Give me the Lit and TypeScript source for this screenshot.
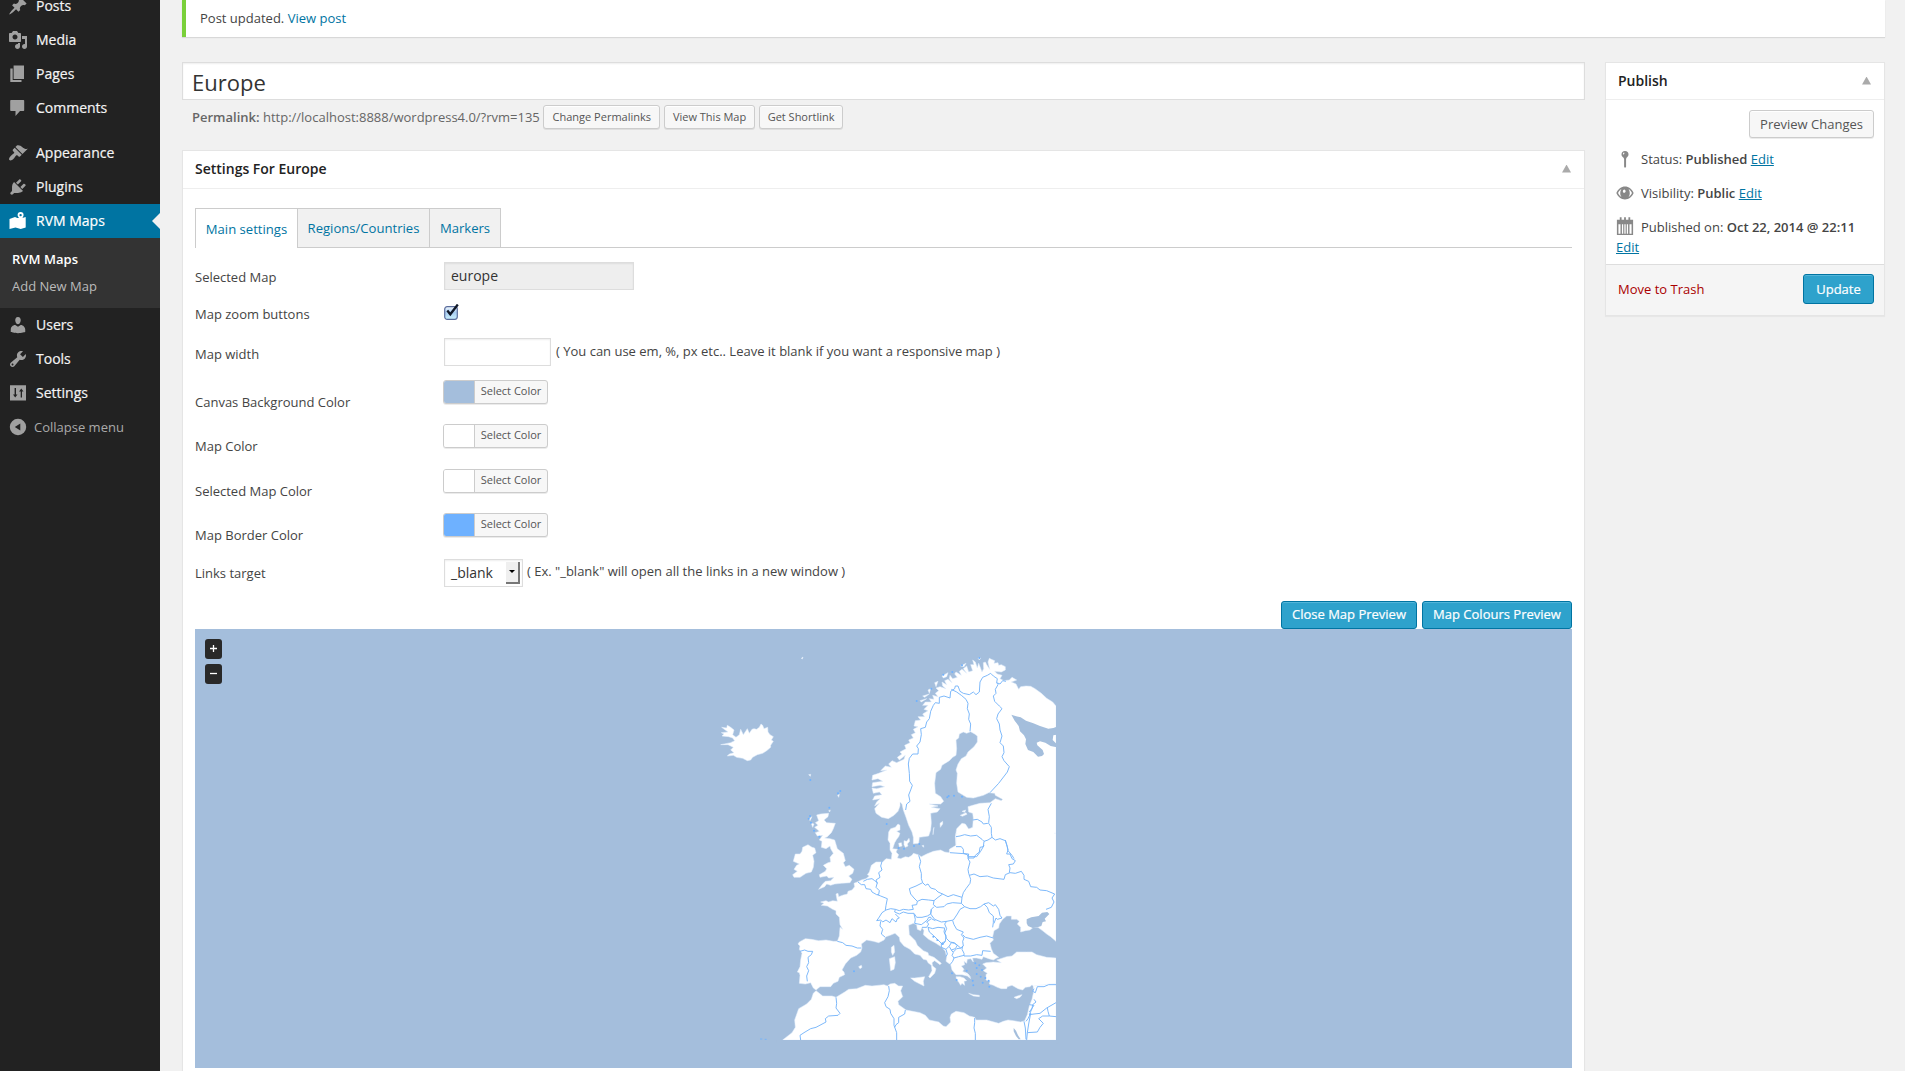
import { LitElement, html, css, svg } from "lit";
import { customElement, property } from "lit/decorators.js";
import { classMap } from "lit/directives/class-map.js";

const ICONS: Record<string, string> = {
  posts:
    "M10.44 3.02l1.82-1.82 6.36 6.35-1.83 1.82c-1.05-.68-2.48-.57-3.41.36l-.75.75c-.92.93-1.04 2.35-.35 3.41l-1.83 1.82-2.41-2.41-2.8 2.79c-.42.42-3.38 2.71-3.8 2.29s1.86-3.39 2.28-3.81l2.79-2.79L4.1 9.36l1.83-1.82c1.05.69 2.48.57 3.4-.36l.75-.75c.93-.92 1.05-2.35.36-3.41z",
  media:
    "M13 11V4c0-.55-.45-1-1-1h-1.67L9 1H5L3.67 3H2c-.55 0-1 .45-1 1v7c0 .55.45 1 1 1h10c.55 0 1-.45 1-1zM7 4.5c1.38 0 2.5 1.12 2.5 2.5S8.38 9.5 7 9.5 4.5 8.38 4.5 7 5.62 4.5 7 4.5zM14 6h5v10.5c0 1.38-1.12 2.5-2.5 2.5S14 17.88 14 16.5s1.12-2.5 2.5-2.5c.17 0 .34.02.5.05V9h-3V6zm-4 8.05V13h2v3.5c0 1.38-1.12 2.5-2.5 2.5S7 17.88 7 16.5 8.12 14 9.5 14c.17 0 .34.02.5.05z",
  pages: "M5.600 1.500H16v13.500H5.600zM2.300 4.500H4.700V16H13.500V18H2.300z",
  comments:
    "M3 2h12.500c.4 0 .7.300.7.700v9.600c0 .4-.3.700-.7.700H12l-4.500 5v-5H3c-.5 0-.8-.3-.8-.7V2.700c0-.4.300-.7.800-.7z",
  appearance:
    "M14.48 11.06L7.41 3.99l1.5-1.5c.5-.56 2.3-.47 3.51.32 1.21.8 1.43 1.28 2.91 2.1 1.18.64 2.45 1.26 4.45.85zm-.71.71L6.7 4.7 4.93 6.47c-.39.39-.39 1.02 0 1.41l1.06 1.06c.39.39.39 1.03 0 1.42-.6.6-1.43 1.11-2.21 1.69-.35.26-.7.53-1.01.84C1.43 14.23.4 16.08 1.4 17.07c.99 1 2.84-.03 4.18-1.36.31-.31.58-.66.85-1.02.57-.78 1.08-1.61 1.69-2.21.39-.39 1.02-.39 1.41 0l1.06 1.06c.39.39 1.02.39 1.41 0z",
  plugins:
    "M13.11 4.36L9.87 7.6 8 5.73l3.24-3.24c.35-.34 1.05-.2 1.56.32.52.51.66 1.21.31 1.55zm-8 1.77l.91-1.12 9.01 9.01-1.19.84c-.71.71-2.63 1.16-3.82 1.16H6.14L4.9 17.26c-.59.59-1.54.59-2.12 0-.59-.58-.59-1.53 0-2.12l1.24-1.24v-3.88c0-1.13.4-3.19 1.09-3.89zm7.26 3.97l3.24-3.24c.34-.35 1.04-.21 1.55.31.52.51.66 1.21.31 1.55l-3.24 3.25z",
  maps:
    "M12.600 1a3 3 0 0 1 3 3c0 1.100-.7 2.200-1.300 3.100L17.700 6v10.500l-5 1.500-5.200-1.500L1.500 18V8l5.500-2 2.300 1h1.700C10.300 6.200 9.600 5.100 9.600 4a3 3 0 0 1 3-3zm0 1.900a1.200 1.200 0 1 0 0 2.400 1.200 1.200 0 0 0 0-2.400z",
  users:
    "M10 9.25c-2.27 0-2.73-3.44-2.73-3.44C7 4.02 7.82 2 9.97 2c2.16 0 2.98 2.02 2.71 3.81 0 0-.41 3.44-2.68 3.44zm0 2.57L12.72 10c2.39 0 4.52 2.33 4.52 4.53v2.49s-3.65 1.13-7.24 1.13c-3.65 0-7.24-1.13-7.24-1.13v-2.49c0-2.25 1.94-4.48 4.47-4.48z",
  tools:
    "M16.68 9.77c-1.34 1.34-3.3 1.67-4.95.99l-5.41 6.52c-.99.99-2.59.99-3.58 0s-.99-2.59 0-3.57l6.52-5.42c-.68-1.65-.35-3.61.99-4.95 1.28-1.28 3.12-1.62 4.72-1.06l-2.89 2.89 2.82 2.82 2.86-2.87c.53 1.58.18 3.39-1.08 4.65zM3.81 16.21c.4.39 1.04.39 1.43 0 .4-.4.4-1.04 0-1.43-.39-.4-1.03-.4-1.43 0-.39.39-.39 1.03 0 1.43z",
  settings:
    "M2 2.200h16v15.300H2zM6.600 5v6.500H5l2.200 3 2.300-3H8V5zM12.700 14.500V8.500H11l2.300-3 2.200 3h-1.500v6z",
  collapse: "M10 1.800a8.200 8.200 0 1 1 0 16.400 8.200 8.200 0 0 1 0-16.400zM12.300 6.500L6.800 10l5.500 3.500z",
  pin: "M10 1a3.900 3.900 0 0 1 3.900 3.900c0 1.600-1 2.700-2.200 3.600l-.5 1.500v8.500L10 20l-1-1.500V10l-.6-1.500C7 7.600 6.100 6.500 6.100 4.900A3.900 3.900 0 0 1 10 1zM8.600 2.800c-.8.500-1 1.500-.8 2.300l1.100-.4c0-.7.300-1 .8-1.400z",
  eye: "M10 2.800c4.200 0 7.700 2.700 9.600 7.200-1.900 4.500-5.400 7.200-9.600 7.200S2.300 14.500.4 10C2.300 5.500 5.800 2.800 10 2.800zM6 5.500C4.400 6.500 3.100 8 2.300 10c.8 1.900 2 3.400 3.700 4.400A6 6 0 0 1 4.700 10c0-1.700.4-3.200 1.300-4.500zm8 0c.9 1.300 1.300 2.800 1.300 4.500S14.900 13.200 14 14.400c1.700-1 2.900-2.500 3.700-4.400-.8-2-2.100-3.500-3.700-4.500zM9.500 6.200A2 2 0 0 0 7.600 8.300c0 1 .8 1.500 1.500 1.500 1 0 1.600-.8 1.600-1.700 0-.8-.4-1.500-1.200-1.900z",
  calendar:
    "M1 3h3.200V.3h2V3h2.800V.3h2V3h2.800V.3h2V3H19v17H1zM2.700 8v10.500H5V8zM6.600 8v10.500H8V8zM9.300 8v10.500h1.400V8zM12 8v10.500h1.400V8zM15 8v10.500h2.300V8z",
};

@customElement("wp-icon")
class WpIcon extends LitElement {
  @property() name = "";
  static styles = css`
    :host { display: block; width: 20px; height: 20px; flex: none; }
    svg { display: block; width: 100%; height: 100%; fill: currentColor; fill-rule: evenodd; }
  `;
  render() {
    return html`<svg viewBox="0 0 20 20"><path d=${ICONS[this.name] ?? ""}></path></svg>`;
  }
}

/* Upper part of the map, in map units (three per pixel). */
const NORTH_LAND = [
  // Scandinavia, Finland, the Baltics and north-west Russia
  "1068,198 1058,186 1040,175 1024,160 1005,146 992,139 978,138 962,140 956,148 948,132 934,126 950,120 936,112 928,120 912,122 900,116 906,106 892,102 884,94 904,96 916,90 916,80 904,74 896,76 894,68 882,70 884,62 874,58 868,55 864,66 869,88 860,74 856,66 850,68 851,86 846,96 840,80 836,70 832,84 826,66 818,60 822,74 812,74 818,92 806,96 800,78 790,86 800,100 786,88 778,94 784,106 768,96 764,102 772,112 758,116 750,106 748,116 756,128 744,118 734,122 740,134 726,126 728,138 738,146 720,140 708,144 716,152 706,160 714,170 698,166 702,178 688,176 694,186 676,186 668,196 684,196 672,208 684,212 668,222 674,230 654,230 662,240 646,242 642,258 654,260 640,268 646,278 634,284 640,294 626,300 630,308 614,316 618,326 600,336 606,342 592,352 598,360 616,346 612,358 590,368 576,362 566,372 574,382 556,378 542,392 560,390 536,400 518,406 516,420 534,416 548,424 518,428 516,440 540,436 554,440 530,446 516,444 520,460 538,456 546,464 524,468 518,480 540,476 530,486 524,498 538,490 524,506 528,520 545,532 565,536 582,526 594,514 600,498 600,486 606,492 610,510 618,532 626,556 636,576 640,592 640,611 656,610 658,592 686,588 692,570 694,548 692,520 712,516 720,506 694,502 714,498 688,492 722,492 731,484 722,470 706,460 704,430 708,398 722,388 726,376 748,362 758,352 768,346 770,326 768,300 776,294 778,282 790,276 800,280 812,275 824,282 832,288 832,306 822,320 804,336 798,348 784,356 774,372 768,390 772,400 770,430 774,456 800,472 820,474 850,466 866,458 884,460 886,466 908,478 904,482 886,476 870,488 840,490 818,496 804,500 806,516 818,520 820,534 818,562 806,567 796,552 786,550 770,566 766,590 768,618 768,720 1068,720",
  // Iceland
  "65,262 80,264 82,256 92,262 102,270 98,284 108,292 118,284 122,268 130,284 142,266 148,280 156,268 162,266 170,268 178,262 183,252 188,256 192,266 203,262 204,276 210,284 220,290 214,300 220,304 212,316 212,322 200,332 188,340 172,344 158,352 152,360 142,362 128,355 110,352 100,346 82,348 88,342 102,338 92,330 100,322 84,314 62,314 92,308 104,302 98,294 86,290 66,288 72,282 64,278 84,276",
  // Gotland, Öland, Saaremaa, Hiiumaa, Zealand, Funen, Bornholm
  "720,550 728,544 728,552 721,562",
  "700,568 702,562 699,584",
  "781,526 798,518 801,523 787,529",
  "786,514 797,510 794,517",
  "612,602 620,604 627,595 629,604 622,612 624,618 616,622 612,614",
  "596,610 604,608 606,618 598,620",
  "666,617 671,616 671,622",
  // Lofoten and Vesterålen
  "660,182 680,176 664,186",
  "668,168 688,162 674,172",
  "684,150 692,146 688,160",
  "704,128 714,124 708,140",
  "726,108 744,98 740,110 730,114",
  "782,78 798,70 792,80",
  "834,54 842,54 838,60",
  // Jan Mayen, Faroes, Shetland, Orkney and the Hebrides
  "304,55 309,51 307,57",
  "326,404 332,403 331,409",
  "413,466 418,463 416,472",
  "386,512 391,510 389,516",
  "328,536 336,530 330,542",
  "334,550 342,552 338,562",
];

/* Lower part of the map; drawn with its own origin. */
const SOUTH_LAND = [
  // Continental Europe
  "828,-20 528,-20 528,16 508,28 508,38 494,36 482,30 460,34 440,42 424,50 414,44 400,40 396,46 386,52 376,50 362,56 352,54 356,44 348,36 352,28 338,26 344,8 350,-2 356,-10 360,-20 350,-26 360,-30 360,-44 354,-48 346,-38 332,-34 326,-24 324,0 330,10 330,30 336,40 334,58 318,56 308,66 300,66 288,66 274,76 268,96 262,104 268,108 258,116 244,120 232,126 222,130 224,140 216,150 204,154 202,162 190,165 176,170 174,160 168,162 172,184 158,182 146,186 138,182 122,186 132,190 124,196 142,198 158,208 168,212 168,222 178,232 180,254 188,268 180,262 178,288 172,304 160,304 138,300 116,302 94,298 76,296 58,306 54,312 60,318 58,328 66,340 62,360 60,380 52,396 58,398 60,406 58,430 76,432 92,428 100,444 108,450 120,440 152,440 160,430 174,424 178,412 194,404 192,396 186,390 196,372 212,354 230,346 242,336 246,324 244,312 260,300 280,304 296,308 312,300 318,290 330,286 345,280 358,292 360,304 372,318 390,328 404,342 420,346 430,358 440,360 444,368 454,376 456,392 446,410 450,414 464,400 468,386 458,378 456,368 464,362 480,374 484,370 462,352 446,346 444,338 430,332 412,316 406,302 388,284 386,256 400,250 410,254 412,268 422,272 426,262 432,272 430,284 446,298 468,310 486,322 496,334 500,352 498,364 512,374 516,390 528,404 546,404 562,408 572,416 566,404 548,394 552,388 544,378 554,374 552,364 560,370 562,358 572,356 580,366 578,354 590,354 606,358 610,350 626,356 640,360 650,354 656,352 640,340 634,326 630,310 640,300 638,290 642,272 656,264 658,252 668,238 680,228 694,228 694,238 710,238 718,244 712,252 722,262 722,276 736,272 750,270 760,262 774,262 790,274 800,282 812,290 828,304",
  // Peloponnese and Euboea
  "528,410 540,410 552,414 560,422 552,424 554,436 546,430 542,436 536,426 530,420",
  "552,396 562,400 572,412 560,404",
  // Anatolia
  "608,372 618,368 640,366 664,368 650,360 680,350 696,348 710,336 740,336 756,336 770,344 800,352 828,354 828,446 766,446 756,434 750,440 736,442 728,450 714,446 696,436 682,440 680,446 664,446 652,442 640,436 628,432 630,424 618,420 618,404 622,400 610,392 620,384",
  // Levant and North Africa
  "828,430 760,438 760,460 756,478 748,498 742,524 734,542 722,546 700,542 684,540 670,544 656,550 620,540 588,540 584,532 568,528 552,518 528,514 514,522 510,532 512,546 498,560 490,558 476,546 448,540 436,526 420,518 398,514 378,510 356,494 354,484 368,470 362,452 368,438 356,438 344,430 330,432 322,438 312,434 276,438 256,436 230,446 206,448 194,456 168,472 156,468 128,468 118,460 108,452 100,460 94,478 80,492 56,506 44,540 46,562 36,578 8,600 828,600",
  // Great Britain
  "110,-75 122,-78 146,-80 144,-70 132,-60 140,-52 166,-50 160,-34 154,-22 142,-10 134,-6 150,-4 164,0 172,26 190,40 196,62 190,68 196,80 208,76 222,88 218,100 206,108 216,118 210,128 184,130 164,132 152,136 140,132 134,140 116,148 128,132 136,124 152,122 162,112 146,114 140,108 120,112 118,104 136,94 140,86 130,76 144,68 152,66 150,52 160,40 152,26 150,18 138,26 124,22 126,4 118,0 128,-14 112,-12 106,-22 118,-26 104,-38 114,-44 106,-52 116,-58",
  // Ireland
  "68,22 84,14 96,22 104,24 108,38 98,46 102,64 100,82 94,96 78,100 60,112 42,112 38,104 52,94 42,88 50,76 58,72 40,64 42,56 46,42 60,42 66,34",
  // Mediterranean islands
  "334,322 342,316 344,336 338,346 334,336",
  "328,356 344,350 346,368 342,388 332,392 330,374",
  "392,414 404,414 434,410 430,424 432,438 420,432 404,424",
  "566,460 580,464 598,466 598,470 580,468",
  "702,472 712,468 726,464 720,472 710,476",
  "236,380 244,376 246,382 240,386",
];

const NORTH_WATER = [
  "934,224 946,228 962,232 978,242 1000,250 1020,258 1045,266 1060,264 1070,260 1070,284 1060,286 1058,300 1070,312 1070,322 1052,318 1036,308 1020,304 1010,308 1012,316 1028,330 1032,342 1026,348 1014,350 1000,336 984,330 976,312 978,298 972,286 960,274 956,258 944,242",
];
const SOUTH_WATER = [
  "740,238 754,232 776,228 786,218 802,216 808,222 794,236 798,244 788,246 784,258 772,262 758,264 744,258 740,250",
  "701,564 708,572 714,586 722,598 716,598 708,588 701,574",
];

const NORTH_BORDERS = [
  "617,510 620,492 630,484 626,465 632,450 637,436 629,424 628,400 625,372 628,355 638,342 654,342 655,326 650,318 660,306 664,284 662,266 676,262 680,246 688,236 692,214 700,196 706,188 718,190 718,172 732,168 750,174 752,154 764,146",
  "754,148 770,156 784,166 798,178 804,190 802,206 808,222 806,238 812,252 810,274",
  "764,146 766,138 774,138 780,154 790,160 808,164 820,156 828,164 838,156 840,126 848,112 862,106 872,100 880,108 892,116 890,128",
  "890,128 894,134 886,148 888,160 880,168 884,184 898,198 906,206 894,222 890,236 898,252 900,270 906,288 900,308 910,318 912,338 906,350 912,362 928,380 922,396 896,430 870,458",
  "890,128 900,132 908,122 918,124",
  "874,490 864,508 868,530 866,548 862,552",
  "818,540 832,538 846,546 850,552 862,550",
  "866,550 874,562 874,580 876,592",
  "768,590 780,588 794,584 812,588 830,586 846,598 852,604 864,600 876,592",
  "852,604 850,620 840,622 838,636 826,646 822,654 806,654",
  "768,620 784,620 790,628 790,640 802,644 806,656",
  "876,592 886,600 900,596 916,602 922,620 924,632 936,646 942,656",
];

const SOUTH_BORDERS = [
  "676,0 680,14 684,30 680,42 690,42 696,56 706,62 700,72 686,74 690,84 688,98",
  "568,106 582,102 600,110 622,108 640,114 672,118 676,104 690,98",
  "690,98 706,100 724,94 732,106 732,118 746,124 752,140 770,142 780,150 800,152 824,162 816,174 822,186 814,202 798,208",
  "510,38 566,42 564,56 570,66 564,88 566,100 572,118 570,130 558,146 550,158 546,172",
  "566,50 590,50 602,34 612,16",
  "416,46 422,64 418,80 424,100 424,116 428,128",
  "428,128 408,138 388,146 392,162 402,174 412,184 426,178 446,180 462,182 474,172 488,162 474,156 466,148 452,144 444,132 436,136 428,128",
  "488,162 504,170 520,164 546,172 544,190 518,188 500,192 492,200 470,202 460,194 462,182",
  "412,184 410,194 396,196 400,208 386,210 370,208 358,212 346,208 344,216 358,222 370,216 384,220 402,220 410,232 426,232 442,228 452,222 454,208 462,200",
  "454,208 452,222 464,238 484,246 500,244 520,240 532,222 540,208 554,200 544,190",
  "346,208 332,206 318,210 306,218 296,234 290,242 302,240 308,246 318,240 330,248 336,236 348,246 352,236 358,234 346,222",
  "302,244 300,258 308,268 304,282 316,292",
  "292,164 302,168 322,176 318,196 316,210",
  "234,126 244,134 254,134 258,146 272,148 276,156 290,164 296,164 298,152 288,142 292,128 284,122 276,116 262,118 250,124",
  "292,130 288,120 300,112 296,98 306,90 302,78 306,64",
  "172,304 188,308 198,316 216,318 232,324 244,324",
  "60,334 74,330 84,334 98,334 94,344 84,352 86,368 80,380 86,392 80,408 82,424",
  "402,222 406,238 404,250 424,254 432,248 442,240 446,232 454,232",
  "426,262 440,262 446,252 440,246 454,236 466,242",
  "444,262 458,266 474,262 494,264 492,276 498,286 496,304 488,314 474,300 460,286 448,276 444,262",
  "500,244 494,252 500,266 494,280 500,296 510,306 522,308 530,314 542,324 550,318 548,304 552,294 544,284 550,276 530,268 522,254 518,242",
  "548,284 556,292 580,298 600,292 620,288 640,294",
  "554,200 570,206 588,206 602,200 612,192 622,202 628,218 640,228 640,248 638,262",
  "612,192 626,188 640,198 646,194 656,208 660,226 666,234 652,238 648,234 642,250",
  "548,318 546,328 552,340 552,348 572,348 590,344 606,346 608,332 632,334",
  "496,304 484,310 484,322 498,328 508,318 514,308 524,310 532,316 526,326 514,330 508,320",
  "498,328 502,342 498,350",
  "514,330 520,338 516,346 522,354 536,350 552,346",
  "520,336 530,326 544,324",
  "522,354 518,364 510,374",
  "168,472 170,490 168,504 180,520 174,526 146,528 136,536 138,546 108,562 92,566 72,578 60,586 62,600",
  "326,438 328,452 324,470 314,488 318,500 330,508 332,520 342,536 342,556 350,578 350,600",
  "376,510 374,522 356,532 356,548 348,554 344,562",
  "584,534 584,548 582,564 586,580 586,600",
  "762,446 758,454 766,458 772,440 792,440 806,434 828,434",
  "762,478 768,486 758,494 756,506 748,524 762,522 780,520 800,504 828,488",
  "802,504 804,514 808,528 828,530",
  "808,528 788,528 776,536 790,550 780,562 772,576 742,578",
  "738,544 744,536 752,520 746,552 742,578 740,600",
  "732,544 736,564 738,598",
  "748,494 762,496 748,516",
];

/* Coastal specks that show only as border colour. */
const SPECKS = [
  [330, 528], [326, 536], [333, 548], [342, 572], [358, 590], [414, 460], [421, 453], [388, 503], [331, 420],
  [650, 183], [694, 146], [730, 104], [757, 96], [786, 76], [838, 54], [746, 468], [742, 472], [762, 467], [786, 470],
  [560, 552], [596, 624], [612, 626], [642, 618], [658, 612], [800, 992], [830, 984], [838, 976], [846, 990],
  [830, 1002], [842, 1010], [856, 1014], [866, 1022], [868, 1040], [848, 1028], [818, 1022], [820, 1036], [462, 994],
  [756, 1000], [770, 1020], [700, 890], [712, 900], [728, 912], [826, 970],
];

@customElement("europe-map")
class EuropeMap extends LitElement {
  static styles = css`
    :host { display: block; }
    svg { display: block; width: 100%; height: 100%; }
    .land { fill: #fff; stroke: #e4f0fd; stroke-width: 1.6; stroke-linejoin: round; }
    .water { fill: #a4bedc; }
    .border { fill: none; stroke: #74b4fa; stroke-width: 2.8; stroke-linejoin: round; }
    .speck { fill: #6eb1ff; }
    .seam { fill: #fff; }
    .frame { fill: #a4bedc; }
  `;
  private shapes(list: string[], cls: string) {
    return list.map((p) => svg`<polygon class=${cls} points=${p}></polygon>`);
  }
  private lines(list: string[]) {
    return list.map((p) => svg`<polyline class="border" points=${p}></polyline>`);
  }
  render() {
    return html`<svg viewBox="-1515 -33 4131 1317">
      ${svg`
        <g>${this.shapes(NORTH_LAND, "land")}${this.shapes(NORTH_WATER, "water")}</g>
        <g transform="translate(240 600)">${this.shapes(SOUTH_LAND, "land")}${this.shapes(SOUTH_WATER, "water")}</g>
        <rect class="seam" x="772" y="570" width="290" height="30"></rect>
        <rect class="seam" x="772" y="700" width="290" height="30"></rect>
        <g>${this.lines(NORTH_BORDERS)}</g>
        <g transform="translate(240 600)">${this.lines(SOUTH_BORDERS)}</g>
        ${SPECKS.map(([x, y]) => svg`<circle class="speck" cx=${x} cy=${y} r="3"></circle>`)}
        <rect class="frame" x="1068" y="100" width="8" height="1110"></rect>
        <rect class="frame" x="230" y="1200" width="846" height="8"></rect>
        <path class="border" d="M180 1197h7M194 1198h6"></path>
      `}
    </svg>`;
  }
}

interface MenuItem {
  icon: string;
  label: string;
  gap?: boolean;
  current?: boolean;
}
const MENU: MenuItem[] = [
  { icon: "posts", label: "Posts" },
  { icon: "media", label: "Media" },
  { icon: "pages", label: "Pages" },
  { icon: "comments", label: "Comments" },
  { icon: "appearance", label: "Appearance", gap: true },
  { icon: "plugins", label: "Plugins" },
  { icon: "maps", label: "RVM Maps", current: true },
  { icon: "users", label: "Users" },
  { icon: "tools", label: "Tools" },
  { icon: "settings", label: "Settings" },
];

@customElement("admin-menu")
class AdminMenu extends LitElement {
  static styles = css`
    :host { display: block; width: 160px; flex: none; background: #222; color: #f4f4f4; font-size: 14px; }
    .list { margin-top: -11px; }
    .item { display: flex; align-items: center; height: 34px; padding-left: 8px; gap: 8px; }
    .item wp-icon { color: #a0a0a0; }
    .label { line-height: 20px; -webkit-text-stroke: 0.2px currentColor; }
    .gap { margin-top: 11px; }
    .current { background: #0074a2; color: #fff; position: relative; }
    .current wp-icon { color: #fff; }
    .current::after {
      content: ""; position: absolute; right: 0; top: 9px;
      border: 8px solid transparent; border-right-color: #f1f1f1; border-left: 0;
    }
    .sub { height: 70px; background: #333; box-sizing: border-box; padding: 8px 0 0 12px; font-size: 13px; }
    .entry { height: 27px; line-height: 27px; color: #bbb; }
    .on { color: #fff; font-weight: 600; letter-spacing: 0.05px; }
    .collapse { color: #aaa; font-size: 13px; gap: 6px; }
    .collapse .label { -webkit-text-stroke: 0; }
  `;
  render() {
    return html`<nav class="list">
      ${MENU.map(
        (m) => html`<div class=${classMap({ item: true, gap: !!m.gap, current: !!m.current })}>
            <wp-icon .name=${m.icon}></wp-icon><span class="label">${m.label}</span>
          </div>
          ${m.current
            ? html`<div class="sub"><div class="entry on">RVM Maps</div><div class="entry">Add New Map</div></div>`
            : ""}`
      )}
      <div class="item collapse"><wp-icon .name=${"collapse"}></wp-icon><span class="label">Collapse menu</span></div>
    </nav>`;
  }
}

@customElement("app-root")
class AppRoot extends LitElement {
  static styles = css`
    :host {
      display: flex; width: 1905px; height: 1071px; overflow: hidden; background: #f1f1f1; color: #444;
      font-family: "Open Sans", "Noto Sans", sans-serif; font-size: 13px; line-height: 20px;
    }
    * { box-sizing: border-box; }
    .content { flex: 1; min-width: 0; padding-left: 22px; display: flex; flex-direction: column; }
    .notice {
      width: 1703px; height: 37px; flex: none; background: #fff; border-left: 4px solid #7ad03a;
      box-shadow: 0 1px 1px rgba(0, 0, 0, 0.1); padding: 8px 0 0 14px;
    }
    .link { color: #0074a2; }
    .ul { text-decoration: underline; }
    .columns { display: flex; gap: 20px; margin-top: 25px; align-items: flex-start; }
    .primary { width: 1403px; }
    .title {
      height: 38px; border: 1px solid #ddd; background: #fff; color: #333; font-size: 22px; line-height: 38px;
      padding-left: 9px; box-shadow: inset 0 1px 2px rgba(0, 0, 0, 0.07);
    }
    .permalink { display: flex; align-items: center; height: 24px; margin-top: 5px; padding-left: 10px; color: #666; white-space: nowrap; }
    .permalink .button { margin-left: 3.500px; }
    b { font-weight: 600; }
    .button {
      display: inline-flex; align-items: center; justify-content: center; border: 1px solid #ccc; border-radius: 3px;
      background: #f7f7f7; color: #555; white-space: nowrap; box-shadow: inset 0 1px 0 #fff, 0 1px 0 rgba(0, 0, 0, 0.08);
    }
    .small { height: 24px; font-size: 11px; }
    .w1 { width: 117px; }
    .w2 { width: 91.500px; }
    .w3 { width: 84.500px; }
    .blue {
      background: #2ea2cc; border-color: #0074a2; color: #fff; box-shadow: inset 0 1px 0 rgba(120, 200, 230, 0.5);
      -webkit-text-stroke: 0.2px #fff; padding-bottom: 1px;
    }
    .box { background: #fff; border: 1px solid #e5e5e5; box-shadow: 0 1px 1px rgba(0, 0, 0, 0.04); }
    .settings { margin-top: 21px; height: 960px; }
    .head {
      height: 37px; border-bottom: 1px solid #eee; display: flex; align-items: center; justify-content: space-between;
      padding: 0 12px; color: #222; font-size: 14px; font-weight: 600;
    }
    .settings .head { height: 38px; padding-bottom: 1px; }
    .arrow { width: 9px; height: 8px; margin: 0 1px 1px 0; background: #aaa; clip-path: polygon(50% 0, 100% 100%, 0 100%); }
    .inside { padding: 19px 12px 0; }
    .tabs { display: flex; height: 40px; border-bottom: 1px solid #ccc; font-size: 13.100px; }
    .tab {
      height: 40px; border: 1px solid #ccc; border-left: 0; background: #f1f1f1; color: #0074a2;
      display: flex; align-items: center; justify-content: center;
    }
    .active { width: 103px; border-left: 1px solid #ccc; border-bottom: 0; background: #fff; padding-top: 0.500px; }
    .regions { width: 132px; }
    .markers { width: 71px; }
    .form { padding-top: 14px; }
    .row { display: flex; align-items: flex-start; }
    .label { width: 249px; flex: none; margin-top: 5px; }
    .h-map { height: 42px; }
    .h-check { height: 34px; }
    .h-check .label { margin-top: 0; }
    .h-width { height: 41.600px; }
    .h-width .label { margin-top: 6px; }
    .h-color { height: 44.500px; }
    .h-color .label { width: 248px; margin-top: 12px; }
    .h-target { height: 28px; margin-top: 1.400px; }
    .h-target .label { margin-top: 4px; }
    .input {
      height: 28px; border: 1px solid #ddd; background: #fff; color: #333; font-size: 14px; line-height: 25px; padding-left: 6px;
      box-shadow: inset 0 1px 2px rgba(0, 0, 0, 0.07);
    }
    .disabled { width: 190px; background: #eee; }
    .narrow { width: 107px; }
    .note { margin: 3px 0 0 5px; }
    .check { width: 16px; height: 18px; margin-top: 0; }
    .picker { height: 24px; width: 105px; border: 1px solid #ccc; border-radius: 3px; display: flex; background: #f7f7f7; overflow: hidden; box-shadow: 0 1px 0 rgba(0, 0, 0, 0.08); }
    .swatch { width: 31px; border-right: 1px solid #ccc; }
    .pick { flex: 1; text-align: center; font-size: 11px; line-height: 20.600px; color: #555; }
    .select { width: 79px; display: flex; align-items: flex-start; }
    .drop {
      width: 14px; height: 22px; margin: 2px 2px 0 auto; background: #efefef; border-right: 2px solid #777; border-bottom: 2px solid #777;
      display: flex; align-items: center; justify-content: center;
    }
    .caret { border: 3px solid transparent; border-top-color: #000; border-bottom: 0; }
    .target-note { margin: 2px 0 0 4px; }
    .actions { display: flex; justify-content: flex-end; gap: 5px; margin-top: 14px; }
    .actions .button { height: 28px; }
    .close { width: 136px; }
    .colours { width: 150px; }
    .map { height: 439px; background: #a4bedc; position: relative; }
    .map europe-map { height: 439px; }
    .zoom {
      position: absolute; left: 10px; width: 17px; height: 20px; background: #292929; border-radius: 3px; color: #fff;
      display: flex; align-items: center; justify-content: center;
    }
    .in { top: 10px; }
    .out { top: 35px; }
    .zoom svg { width: 7px; height: 7px; display: block; }
    .publish { width: 280px; height: 254px; display: flex; flex-direction: column; }
    .publish .head { padding-right: 12px; flex: none; }
    .minor { padding: 10px 10px 0; height: 164px; display: flex; flex-direction: column; }
    .preview { align-self: flex-end; height: 28px; width: 125px; font-size: 13px; }
    .meta { display: flex; align-items: center; height: 20px; margin-top: 14px; white-space: nowrap; gap: 7px; }
    .meta wp-icon { width: 18px; height: 18px; color: #888; }
    .meta .tall { margin-top: -3px; }
    .first { margin-top: 11px; }
    .foot {
      flex: 1; border-top: 1px solid #ddd; background: #f5f5f5; display: flex; align-items: center; justify-content: space-between;
      padding: 0 10px 2px 12px;
    }
    .trash { color: #a00; }
    .update { height: 30px; width: 71px; }
  `;

  private picker(label: string, color: string) {
    return html`<div class="row h-color">
      <div class="label">${label}</div>
      <div class="picker"><div class="swatch" style="background:${color}"></div><div class="pick">Select Color</div></div>
    </div>`;
  }

  render() {
    return html`
      <admin-menu></admin-menu>
      <main class="content">
        <div class="notice">Post updated. <span class="link">View post</span></div>
        <div class="columns">
          <div class="primary">
            <div class="title">Europe</div>
            <div class="permalink">
              <span><b>Permalink:</b> http://localhost:8888/wordpress4.0/?rvm=135</span>
              <span class="button small w1">Change Permalinks</span>
              <span class="button small w2">View This Map</span>
              <span class="button small w3">Get Shortlink</span>
            </div>
            <section class="box settings">
              <div class="head"><span>Settings For Europe</span><span class="arrow"></span></div>
              <div class="inside">
                <div class="tabs">
                  <div class="tab active">Main settings</div>
                  <div class="tab regions">Regions/Countries</div>
                  <div class="tab markers">Markers</div>
                </div>
                <div class="form">
                  <div class="row h-map"><div class="label">Selected Map</div><div class="input disabled">europe</div></div>
                  <div class="row h-check">
                    <div class="label">Map zoom buttons</div>
                    <svg class="check" viewBox="0 0 16 18">
                      <defs>
                        <linearGradient id="g" x1="0" y1="0" x2="0" y2="1">
                          <stop offset="0" stop-color="#f4faff"></stop>
                          <stop offset="0.45" stop-color="#a9cdf2"></stop>
                          <stop offset="1" stop-color="#c9f0fd"></stop>
                        </linearGradient>
                      </defs>
                      <rect x="0.700" y="2.700" width="12.600" height="12.600" rx="2.500" fill="url(#g)" stroke="#5b6d9c" stroke-width="1.200"></rect>
                      <path d="M3.300 6.500L6.300 10.300L13.800 0.500" fill="none" stroke="#101828" stroke-width="2.300"></path>
                    </svg>
                  </div>
                  <div class="row h-width">
                    <div class="label">Map width</div>
                    <div class="input narrow"></div>
                    <div class="note">( You can use em, %, px etc.. Leave it blank if you want a responsive map )</div>
                  </div>
                  ${this.picker("Canvas Background Color", "#a4bedc")}
                  ${this.picker("Map Color", "#ffffff")}
                  ${this.picker("Selected Map Color", "#ffffff")}
                  ${this.picker("Map Border Color", "#6eb1ff")}
                  <div class="row h-target">
                    <div class="label">Links target</div>
                    <div class="input select"><span>_blank</span><span class="drop"><span class="caret"></span></span></div>
                    <div class="target-note">( Ex. "_blank" will open all the links in a new window )</div>
                  </div>
                </div>
                <div class="actions">
                  <span class="button blue close">Close Map Preview</span>
                  <span class="button blue colours">Map Colours Preview</span>
                </div>
                <div class="map">
                  <europe-map></europe-map>
                  <div class="zoom in"><svg viewBox="0 0 7 7"><path d="M0 3.500h7M3.500 0v7" stroke="#fff" stroke-width="1.300"></path></svg></div>
                  <div class="zoom out"><svg viewBox="0 0 7 7"><path d="M0 3.500h7" stroke="#fff" stroke-width="1.300"></path></svg></div>
                </div>
              </div>
            </section>
          </div>
          <aside class="box publish">
            <div class="head"><span>Publish</span><span class="arrow"></span></div>
            <div class="minor">
              <span class="button preview">Preview Changes</span>
              <div class="meta first"><wp-icon .name=${"pin"}></wp-icon><span>Status: <b>Published</b> <span class="link ul">Edit</span></span></div>
              <div class="meta"><wp-icon .name=${"eye"}></wp-icon><span>Visibility: <b>Public</b> <span class="link ul">Edit</span></span></div>
              <div class="meta"><wp-icon class="tall" .name=${"calendar"}></wp-icon><span>Published on: <b>Oct 22, 2014 @ 22:11</b></span></div>
              <span class="link ul">Edit</span>
            </div>
            <div class="foot"><span class="trash">Move to Trash</span><span class="button blue update">Update</span></div>
          </aside>
        </div>
      </main>
    `;
  }
}
